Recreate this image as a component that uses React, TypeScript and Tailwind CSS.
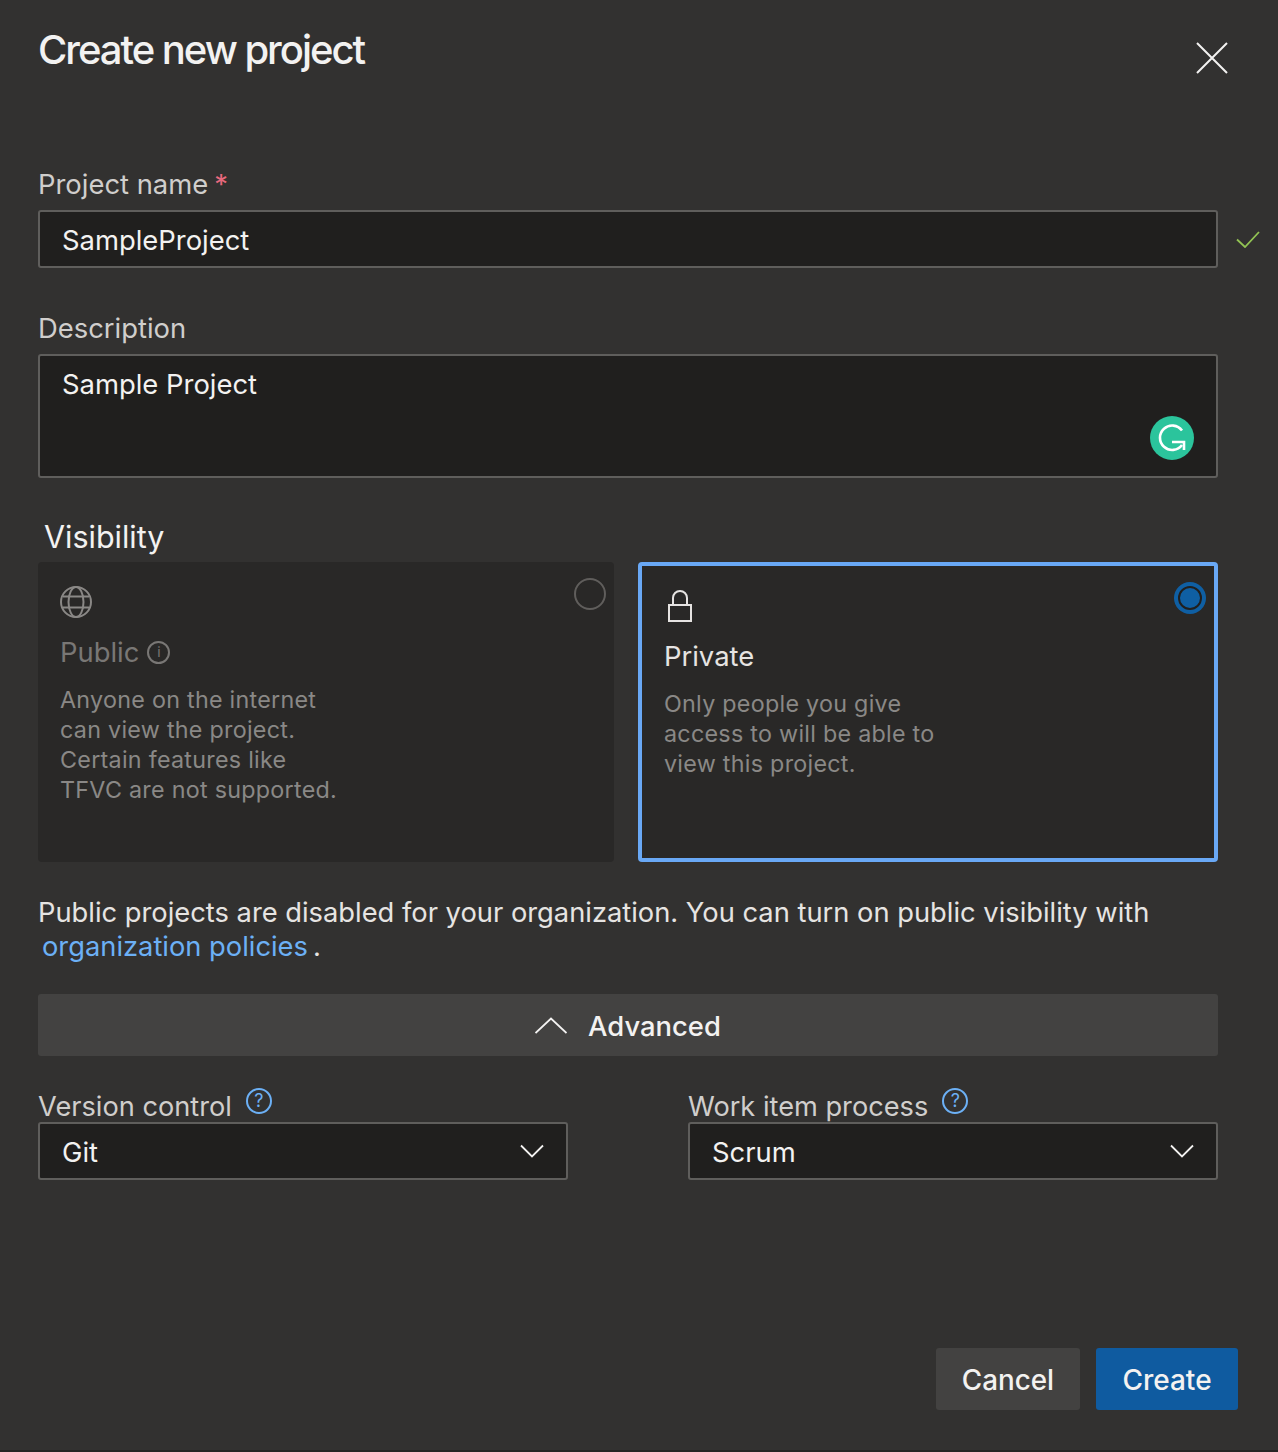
function CloseIcon() {
  return (
    <svg className="mt-[41px] mr-[19px]" width="34" height="34" viewBox="0 0 34 34" fill="none" stroke="#f3f2f1" strokeWidth="2">
      <path d="M2 2l30 30M32 2L2 32" />
    </svg>
  )
}

function CheckIcon() {
  return (
    <svg className="ml-[18px]" width="24" height="18" viewBox="0 0 24 18" fill="none" stroke="#92c353" strokeWidth="1.8">
      <path d="M1 9.5L9 17L23 2" />
    </svg>
  )
}

function GlobeIcon() {
  return (
    <svg width="32" height="32" viewBox="0 0 32 32" fill="none" stroke="#8a8886" strokeWidth="2">
      <circle cx="16" cy="16" r="15" />
      <ellipse cx="16" cy="16" rx="7.5" ry="15" />
      <path d="M3 10.5h26M3 21.5h26" />
    </svg>
  )
}

function LockIcon() {
  return (
    <svg className="ml-[4px]" width="24" height="32" viewBox="0 0 24 32" fill="none" stroke="#e6e4e2" strokeWidth="2">
      <rect x="1" y="15" width="22" height="16" />
      <path d="M5 15V8a7 7 0 0 1 14 0v7" />
    </svg>
  )
}

function HelpIcon() {
  return (
    <span className="flex h-[26px] w-[26px] items-center justify-center rounded-full border-2 border-[#6cb0f5] text-[18px] leading-none text-[#6cb0f5]">
      ?
    </span>
  )
}

function GrammarlyBadge() {
  return (
    <svg className="absolute right-[22px] bottom-[16px]" width="44" height="44" viewBox="0 0 44 44" fill="none">
      <circle cx="22" cy="22" r="22" fill="#2bc49c" />
      <path d="M32 14.5A12.2 12.2 0 1 0 32 29" stroke="white" strokeWidth="2.6" />
      <path d="M22 26h12v8" stroke="white" strokeWidth="2.6" />
    </svg>
  )
}

export default function App() {
  return (
    <div className="flex h-[1452px] w-[1278px] flex-col overflow-hidden border-b-2 border-[#262524] bg-[#323130] pl-[38px] font-['Inter',sans-serif] text-[#f3f2f1]">
      {/* Header */}
      <div className="flex h-[170px] w-[1210px] items-start justify-between">
        <h1 className="mt-[25px] text-[40px] leading-[50px] font-medium tracking-[-2.03px]">Create new project</h1>
        <CloseIcon />
      </div>

      {/* Project name */}
      <label className="flex h-[40px] items-start text-[27.4px] leading-[28px] text-[#d0cecc]">
        <span>Project name</span>
        <span className="ml-[6px] text-[#e8697d]">*</span>
      </label>
      <div className="flex items-center">
        <div className="flex h-[58px] w-[1180px] items-center rounded-[3px] border-2 border-[#5f5e5c] bg-[#201f1e] pt-[4px] pl-[22px] text-[27.4px]">
          SampleProject
        </div>
        <CheckIcon />
      </div>

      {/* Description */}
      <div className="mt-[46px] h-[40px] text-[27.4px] leading-[28px] text-[#d0cecc]">Description</div>
      <div className="relative h-[124px] w-[1180px] rounded-[3px] border-2 border-[#5f5e5c] bg-[#201f1e] px-[22px] pt-[10px] text-[27.4px] leading-[36px]">
        Sample Project
        <GrammarlyBadge />
      </div>

      {/* Visibility */}
      <div className="mt-[40px] ml-[6px] h-[44px] text-[30.5px] leading-[38px]">Visibility</div>
      <div className="flex w-[1180px] gap-[24px]">
        <div className="relative h-[300px] w-[576px] rounded-[4px] bg-[#292827] pt-[24px] pl-[22px]">
          <span className="absolute top-[16px] right-[8px] h-[32px] w-[32px] rounded-full border-2 border-[#605e5c]" />
          <GlobeIcon />
          <div className="mt-[16px] flex items-center gap-[8px] text-[27.4px] leading-[36px] text-[#797775]">
            Public
            <span className="flex h-[23px] w-[23px] items-center justify-center rounded-full border-2 border-[#797775] text-[14px] leading-none">i</span>
          </div>
          <p className="mt-[15px] w-[285px] text-[23.3px] leading-[30px] tracking-[0.27px] text-[#8a8886]">
            Anyone on the internet can view the project. Certain features like TFVC are not supported.
          </p>
        </div>
        <div className="relative h-[300px] w-[580px] rounded-[4px] border-4 border-[#69a8f5] bg-[#292827] pt-[24px] pl-[22px]">
          <span className="absolute top-[16px] right-[8px] flex h-[32px] w-[32px] items-center justify-center rounded-full bg-[#0f5fa3]">
            <span className="h-[24px] w-[24px] rounded-full border-2 border-[#201f1e] bg-[#0f5fa3]" />
          </span>
          <LockIcon />
          <div className="mt-[16px] text-[27.4px] leading-[36px] text-[#e6e4e2]">Private</div>
          <p className="mt-[15px] w-[285px] text-[23.3px] leading-[30px] tracking-[0.27px] text-[#8a8886]">
            Only people you give access to will be able to view this project.
          </p>
        </div>
      </div>

      {/* Notice */}
      <p className="mt-[34px] w-[1180px] text-[27.3px] leading-[34px] text-[#e6e4e2]">
        Public projects are disabled for your organization. You can turn on public visibility with
        <br />
        <span className="ml-[4px] text-[#6cb0f5]">organization policies</span>
        <span className="ml-[5px]">.</span>
      </p>

      {/* Advanced */}
      <div className="mt-[30px] flex h-[62px] w-[1180px] items-center justify-center gap-[21px] rounded-[3px] bg-[#434241] text-[27.4px] font-medium">
        <svg width="32" height="17" viewBox="0 0 32 17" fill="none" stroke="#f3f2f1" strokeWidth="1.8">
          <path d="M0.5 16L16 1.5L31.5 16" />
        </svg>
        <span className="pt-[4px]">Advanced</span>
      </div>

      {/* Version control / process */}
      <div className="mt-[29px] flex w-[1180px] justify-between">
        {[
          { label: 'Version control', value: 'Git' },
          { label: 'Work item process', value: 'Scrum' },
        ].map((item) => (
          <div key={item.label} className="w-[530px]">
            <div className="flex h-[37px] items-start gap-[14px]">
              <span className="pt-[7px] text-[27.2px] leading-[30px] text-[#d0cecc]">{item.label}</span>
              <span className="pt-[3px]"><HelpIcon /></span>
            </div>
            <div className="flex h-[58px] items-center justify-between rounded-[3px] border-2 border-[#5f5e5c] bg-[#201f1e] pr-[22px] pl-[22px] text-[27.4px]">
              <span className="pt-[4px]">{item.value}</span>
              <svg width="24" height="14" viewBox="0 0 24 14" fill="none" stroke="#f3f2f1" strokeWidth="1.8">
                <path d="M1 1.5L12 12.5L23 1.5" />
              </svg>
            </div>
          </div>
        ))}
      </div>

      {/* Footer */}
      <div className="mt-auto mb-[40px] flex w-[1200px] justify-end gap-[16px]">
        <button className="h-[62px] w-[144px] rounded-[3px] bg-[#434241] pt-[4px] text-[27.8px] font-medium">Cancel</button>
        <button className="h-[62px] w-[142px] rounded-[3px] bg-[#0f5ba0] pt-[2px] text-[28px] font-medium">Create</button>
      </div>
    </div>
  )
}
